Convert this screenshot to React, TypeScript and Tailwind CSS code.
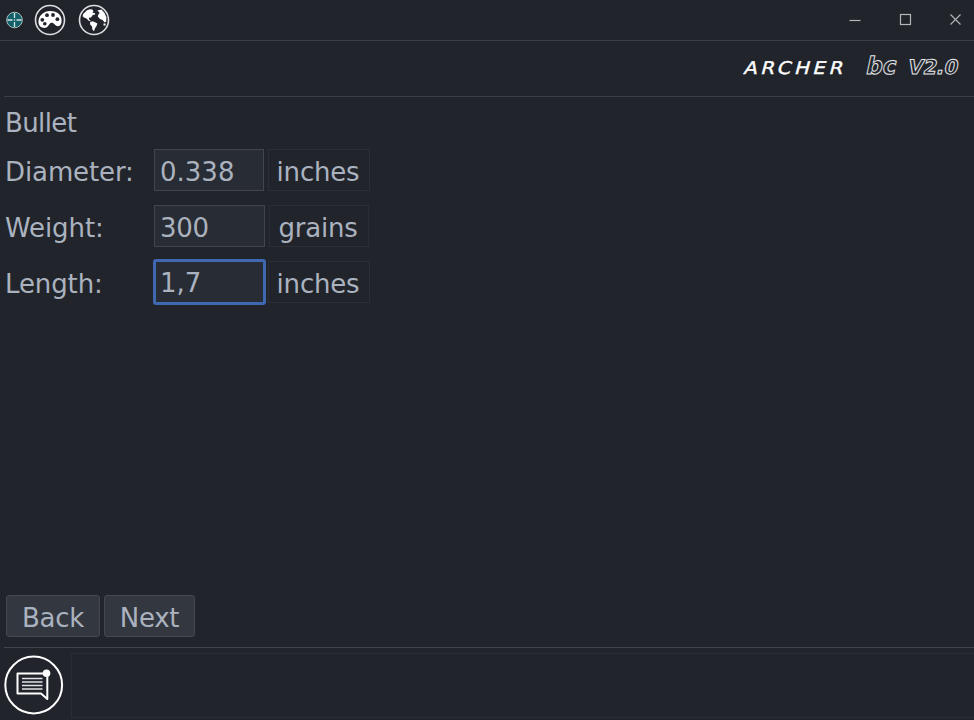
import React from "react";

function Palette() {
  return (
    <svg className="block h-8 w-8" viewBox="0 0 32 32">
      <circle cx="16" cy="16" r="14.5" fill="none" stroke="#dcdee0" strokeWidth="1.6" />
      <path
        fill="#fff"
        d="M4.6 19.5C3.6 12.5 9 7.2 16 7C23.4 6.9 28.6 11.5 27.5 18.2C27 22.6 23 23.2 21 20.8C18.8 18 16.6 18.2 15.2 20.4C13.4 23.6 11 24.6 8.2 23.6C6.2 22.8 4.9 21.4 4.6 19.5Z"
      />
      <g fill="#21252b">
        <circle cx="8.3" cy="15.8" r="1.9" />
        <circle cx="13" cy="11.2" r="1.9" />
        <circle cx="19" cy="11" r="1.9" />
        <circle cx="23.4" cy="15.2" r="1.9" />
        <circle cx="10.8" cy="19.8" r="1.8" />
      </g>
    </svg>
  );
}

function Globe() {
  return (
    <svg className="block h-8 w-8" viewBox="0 0 32 32">
      <circle cx="16" cy="16" r="14.5" fill="none" stroke="#dcdee0" strokeWidth="1.6" />
      <path
        fill="#fff"
        d="M5.2 10L9 6.3L12 5.2L14.5 5.6L15.4 7.8L14.2 8.6L17 9.2L17.2 10.6L14.8 11L13 13.6L11.2 13.6L11 15.2L13 17.2L11 17L8.5 14.6L6 13.6L4.6 12.2ZM12 18.3L14.5 17.2L17 18.3L19.4 19.6L18.4 22.2L17 24.2L16 27.2L14.4 25.6L14 22.6L12.2 20.4ZM19.4 6.6L23.4 5.6L26.6 9L28.4 13L28.2 17.4L26.6 18.4L24.6 16L22 15L19.8 12.6L20.6 10L21.8 9ZM25.5 19.6h2v2h-2Z"
      />
    </svg>
  );
}

function TitleBar() {
  return (
    <header className="flex h-[41px] items-center border-b border-[#3b3e46] pl-[6px] pr-[12px]">
      <svg className="mr-[11px] h-[18px] w-[17px]" viewBox="0 0 17 18">
        <circle cx="8.5" cy="9" r="7.8" fill="#12616a" stroke="#a9bfc2" strokeWidth="1" />
        <path d="M8.5 2v5M8.5 11v5M1.5 9h5M10.5 9h5" stroke="#d7e2e3" strokeWidth="1.3" />
        <circle cx="8.5" cy="9" r="0.8" fill="#d7e2e3" />
      </svg>
      <Palette />
      <div className="w-[12px]" />
      <Globe />
      <svg className="ml-auto h-[14px] w-[114px]" viewBox="0 0 114 14" fill="none" stroke="#b4b6b9">
        <path d="M1.5 7.5h11" strokeWidth="1.2" />
        <rect x="52.5" y="1.5" width="10" height="10" strokeWidth="1.2" />
        <path d="M102.5 1.5l10 10M112.5 1.5l-10 10" strokeWidth="1.1" />
      </svg>
    </header>
  );
}

function Brand() {
  return (
    <div className="ml-[4px] flex h-[56px] justify-end border-b border-[#3b3e46]">
      <svg className="h-[54px] w-[244px]" viewBox="730 41 244 54">
        <text
          transform="translate(743 73.5) skewX(-15) scale(1.13 1)"
          fontFamily="'DejaVu Sans', sans-serif"
          fontSize="17.5"
          textLength="87.5"
          lengthAdjust="spacing"
          fill="#fff"
          stroke="#fff"
          strokeWidth="0.4"
        >
          ARCHER
        </text>
        <g fontFamily="'DejaVu Sans', sans-serif" fontWeight="700" fill="#21252b" stroke="#e4e6e9" strokeWidth="1">
          <text transform="translate(865 74) skewX(-12)" fontSize="24" textLength="30" lengthAdjust="spacingAndGlyphs">bc</text>
          <text transform="translate(907 74) skewX(-12)" fontSize="20" textLength="50" lengthAdjust="spacingAndGlyphs">V2.0</text>
        </g>
      </svg>
    </div>
  );
}

type FieldProps = { label: string; value: string; unit: string; wide?: boolean; focused?: boolean };

function Field({ label, value, unit, wide, focused }: FieldProps) {
  return (
    <div className="flex h-[42px] items-center">
      <label className="w-[149px] shrink-0 pt-[3px] tracking-[-0.1px]">{label}</label>
      <div
        className={
          focused
            ? "-ml-px -mr-[2px] flex h-[46px] w-[113px] shrink-0 items-center rounded-[3px] border-[3px] border-[#4067b1] bg-[#282c34] pl-[4px] pt-[2px]"
            : wide
              ? "flex h-[42px] w-[111px] items-center border border-[#41444c] bg-[#282c34] pl-[5px] pt-[3px] tracking-[-0.3px]"
              : "flex h-[42px] w-[110px] items-center border border-[#41444c] bg-[#282c34] pl-[5px] pt-[3px]"
        }
      >
        {value}
      </div>
      <div
        className={
          wide
            ? "ml-[4px] flex h-[42px] w-[100px] items-center justify-center border border-[#2b2e35] pr-[2px] pt-[3px] tracking-[-0.2px]"
            : "ml-[4px] flex h-[42px] w-[102px] items-center justify-center border border-[#2b2e35] pr-[2px] pt-[3px] tracking-[-0.2px]"
        }
      >
        {unit}
      </div>
    </div>
  );
}

function Footer() {
  return (
    <footer className="ml-[4px] flex h-[73px] border-t border-[#41444c]">
      <svg className="mt-[7px] h-[60px] w-[60px]" viewBox="0 0 60 60" fill="none" stroke="#fff">
        <circle cx="29.7" cy="30" r="28.4" strokeWidth="2" />
        <path d="M42 18.5H13.5V38.5H37L43.3 44V20" strokeWidth="2" strokeLinejoin="round" />
        <circle cx="42.5" cy="18.3" r="3.8" fill="#fff" stroke="none" />
        <path d="M18 23.5h20.5M18 27h20.5M18 30.5h20.5M18 34h20.5" strokeWidth="1.3" stroke="#e0e2e5" />
      </svg>
      <div className="ml-[7px] mt-[5px] h-[65px] flex-1 border border-r-0 border-[#2a2d34]" />
    </footer>
  );
}

export default function App() {
  return (
    <div className="flex h-[720px] w-[974px] flex-col overflow-hidden bg-[#21252b] font-['DejaVu_Sans',sans-serif] text-[26px] leading-[30px] text-[#abb2bf]">
      <TitleBar />
      <Brand />
      <main className="flex flex-1 flex-col pl-[5px]">
        <h1 className="mt-[11px] h-[30px] tracking-[-0.6px]">Bullet</h1>
        <div className="mt-[11px] flex flex-col gap-[14px]">
          <Field label="Diameter:" value="0.338" unit="inches" />
          <Field label="Weight:" value="300" unit="grains" wide />
          <Field label="Length:" value="1,7" unit="inches" focused />
        </div>
        <div className="mb-[10px] ml-px mt-auto flex gap-[4px]">
          <button className="h-[42px] w-[94px] rounded-[3px] border border-[#454850] bg-[#333740] pt-[4px] tracking-[-0.3px]">Back</button>
          <button className="h-[42px] w-[91px] rounded-[3px] border border-[#454850] bg-[#333740] pt-[4px] tracking-[-0.3px]">Next</button>
        </div>
      </main>
      <Footer />
    </div>
  );
}
